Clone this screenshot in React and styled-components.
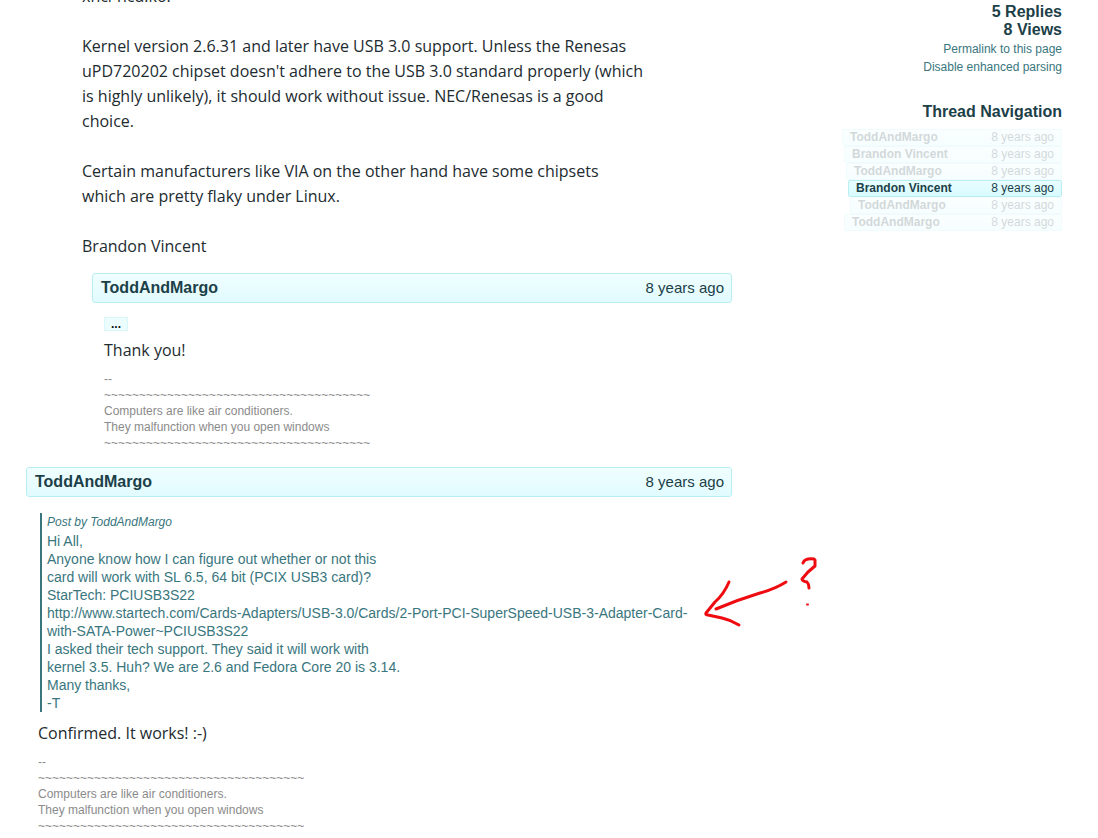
import React from "react";
import styled, { createGlobalStyle } from "styled-components";

const GlobalStyle = createGlobalStyle`
  * { box-sizing: border-box; }
  body {
    margin: 0;
    background: #fff;
    color: #1c4048;
    font-family: "Liberation Sans", Arial, sans-serif;
    overflow: hidden;
  }
`;

const Page = styled.div`
  display: grid;
  grid-template-columns: minmax(0, 1fr) 218px;
  column-gap: 112px;
  align-items: start;
  padding: 0 36px 0 26px;
`;

const Thread = styled.main`
  display: flex;
  flex-direction: column;
  margin-top: -16px;
`;

const Body = styled.div`
  padding: 0 12px;
  margin-left: ${(p) => p.$indent || 0}px;
`;

const Text = styled.p`
  margin: 0 0 ${(p) => p.$gap ?? 25}px;
  color: #222b30;
  font: 16px/25px "Open Sans", "Segoe UI", sans-serif;
`;

const Header = styled.header`
  display: flex;
  justify-content: space-between;
  align-items: center;
  height: 30px;
  margin: ${(p) => p.$top}px 0 ${(p) => p.$bottom}px ${(p) => p.$indent || 0}px;
  padding: 0 7px 0 8px;
  border: 1px solid #b9eff3;
  border-radius: 3px;
  background: linear-gradient(#f0feff, #e1fbff);
`;

const Author = styled.strong`
  font-size: 16px;
  line-height: 18px;
`;

const Age = styled.span`
  font-size: 15px;
  line-height: 18px;
`;

const Expand = styled.button`
  display: block;
  width: 24px;
  height: 14px;
  margin: 0 0 7px;
  padding: 0;
  border: 1px solid #d9f8fa;
  background: #ecfdff;
  color: #111;
  font: bold 12px/10px "Liberation Sans", Arial, sans-serif;
`;

const Signature = styled.div`
  color: #8b8b8b;
  font-size: 12px;
  line-height: 16px;
`;

const Quote = styled.blockquote`
  position: relative;
  margin: 0 0 9px 2px;
  padding: 0 0 0 5px;
  border-left: 2px solid #39767e;
  color: #39767e;
  font-size: 14px;
  line-height: 18px;
`;

const QuoteBy = styled.cite`
  display: block;
  font-size: 12px;
  line-height: 19px;
`;

const Note = styled.svg`
  position: absolute;
  top: 37px;
  right: -110px;
  width: 130px;
  height: 80px;
  fill: none;
  stroke: #ee0c10;
  stroke-width: 3;
  stroke-linecap: round;
  stroke-linejoin: round;
`;

const Sidebar = styled.aside`
  display: flex;
  flex-direction: column;
  padding-top: 3px;
  text-align: right;
`;

const Stat = styled.strong`
  font-size: 16px;
  line-height: 18px;
`;

const SideLinks = styled.div`
  display: flex;
  flex-direction: column;
  margin-top: 1px;
`;

const SideLink = styled.a`
  color: #39767e;
  font-size: 12px;
  line-height: 18px;
  text-decoration: none;
`;

const NavTitle = styled.h2`
  margin: 27px 0 8px;
  font-size: 16px;
  line-height: 18px;
`;

const NavList = styled.nav`
  display: flex;
  flex-direction: column;
`;

const NavRow = styled.a`
  display: flex;
  justify-content: space-between;
  align-items: center;
  height: 17px;
  margin-left: ${(p) => p.$level * 2 - 2}px;
  padding: 0 7px;
  border: 1px solid #b9eff3;
  border-radius: 2px;
  background: linear-gradient(#e9fdff, #d8fbff);
  color: #1c4048;
  font-size: 12px;
  line-height: 15px;
  text-decoration: none;
  opacity: ${(p) => (p.$current ? 1 : 0.2)};
`;

const rows = [
  ["ToddAndMargo", 0],
  ["Brandon Vincent", 1],
  ["ToddAndMargo", 2],
  ["Brandon Vincent", 3],
  ["ToddAndMargo", 4],
  ["ToddAndMargo", 1],
];

const TILDES = "~".repeat(38);

function PostHeader(props) {
  return (
    <Header {...props}>
      <Author>ToddAndMargo</Author>
      <Age>8 years ago</Age>
    </Header>
  );
}

function Sig() {
  return (
    <Signature>
      --<br />
      {TILDES}<br />
      Computers are like air conditioners.<br />
      They malfunction when you open windows<br />
      {TILDES}
    </Signature>
  );
}

export default function App() {
  return (
    <>
      <GlobalStyle />
      <Page>
        <Thread>
          <Body $indent={44}>
            <Text>xhci-hcd.ko.</Text>
            <Text>
              Kernel version 2.6.31 and later have USB 3.0 support. Unless the Renesas<br />
              uPD720202 chipset doesn't adhere to the USB 3.0 standard properly (which<br />
              is highly unlikely), it should work without issue. NEC/Renesas is a good<br />
              choice.
            </Text>
            <Text>
              Certain manufacturers like VIA on the other hand have some chipsets<br />
              which are pretty flaky under Linux.
            </Text>
            <Text $gap={0}>Brandon Vincent</Text>
          </Body>

          <PostHeader $top={14} $bottom={14} $indent={66} />
          <Body $indent={66}>
            <Expand type="button" aria-label="Show quoted text">...</Expand>
            <Text $gap={8}>Thank you!</Text>
            <Sig />
          </Body>

          <PostHeader $top={16} $bottom={16} />
          <Body>
            <Quote>
              <QuoteBy>Post by ToddAndMargo</QuoteBy>
              Hi All,<br />
              Anyone know how I can figure out whether or not this<br />
              card will work with SL 6.5, 64 bit (PCIX USB3 card)?<br />
              StarTech: PCIUSB3S22<br />
              http://www.startech.com/Cards-Adapters/USB-3.0/Cards/2-Port-PCI-SuperSpeed-USB-3-Adapter-Card-<br />
              with-SATA-Power~PCIUSB3S22<br />
              I asked their tech support. They said it will work with<br />
              kernel 3.5. Huh? We are 2.6 and Fedora Core 20 is 3.14.<br />
              Many thanks,<br />
              -T
              <Note viewBox="0 0 130 80" aria-hidden="true">
                <path d="M86 32Q75 39 60 43Q37 50 16 59" />
                <path d="M29 32Q24 44 15 52L6 63Q5 65 8 65L22 68Q31 70 39 75" />
                <path d="M103 13Q105 8 114 9L115 10V16L108 22L102 29Q102 31 107 32Q109 34 109 38" />
                <path d="M107 54.5h1" strokeWidth="2" />
              </Note>
            </Quote>
            <Text $gap={8}>Confirmed. It works! :-)</Text>
            <Sig />
          </Body>
        </Thread>

        <Sidebar>
          <Stat>5 Replies</Stat>
          <Stat>8 Views</Stat>
          <SideLinks>
            <SideLink href="#permalink">Permalink to this page</SideLink>
            <SideLink href="#parsing">Disable enhanced parsing</SideLink>
          </SideLinks>
          <NavTitle>Thread Navigation</NavTitle>
          <NavList aria-label="Thread Navigation">
            {rows.map(([name, level], i) => (
              <NavRow key={i} href="#post" $level={level} $current={i === 3}>
                <strong>{name}</strong>
                <span>8 years ago</span>
              </NavRow>
            ))}
          </NavList>
        </Sidebar>
      </Page>
    </>
  );
}
